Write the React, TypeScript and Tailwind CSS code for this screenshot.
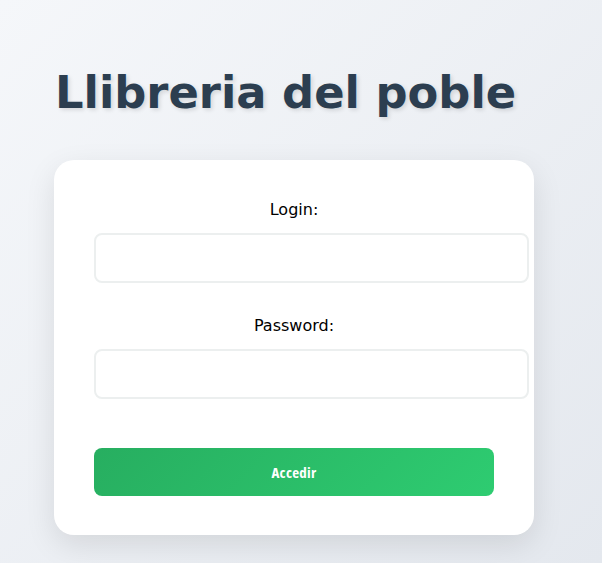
export default function App() {
  return (
    <div className="min-h-[563px] bg-[linear-gradient(135deg,#f5f7fa_0%,#e4e8ee_100%)] px-[54px] pt-[64px] pb-[28px] font-['DejaVu_Sans',sans-serif]">
      {/* Title */}
      <h1 className="whitespace-nowrap text-[44.8px] font-bold leading-[58px] text-[#2c3e50] [text-shadow:2px_2px_4px_rgba(0,0,0,0.12)] ml-px">
        Llibreria del poble
      </h1>

      {/* Login card */}
      <div className="mt-[38px] w-[480px] rounded-[20px] bg-white px-10 pt-10 pb-[39px] shadow-[0_10px_30px_rgba(0,0,0,0.1)]">
        <div className="mb-[33px]">
          <label className="block text-center text-base leading-5 text-black mb-[13px]">Login:</label>
          <input
            type="text"
            className="box-content block w-full h-[18px] pl-[15px] pr-[16px] py-[14px] rounded-lg border-2 border-[#ecefef] bg-white outline-none"
          />
        </div>

        <div>
          <label className="block text-center text-base leading-5 text-black mb-[13px]">Password:</label>
          <input
            type="password"
            className="box-content block w-full h-[18px] pl-[15px] pr-[16px] py-[14px] rounded-lg border-2 border-[#ecefef] bg-white outline-none"
          />
        </div>

        <button className="mt-[49px] block w-full h-12 rounded-lg bg-[linear-gradient(135deg,#27ae60_0%,#2ecc71_100%)] text-white text-[15px] tracking-[0.3px] leading-5 font-bold font-stretch-condensed font-['Open_Sans',sans-serif]">
          Accedir
        </button>
      </div>
    </div>
  )
}
